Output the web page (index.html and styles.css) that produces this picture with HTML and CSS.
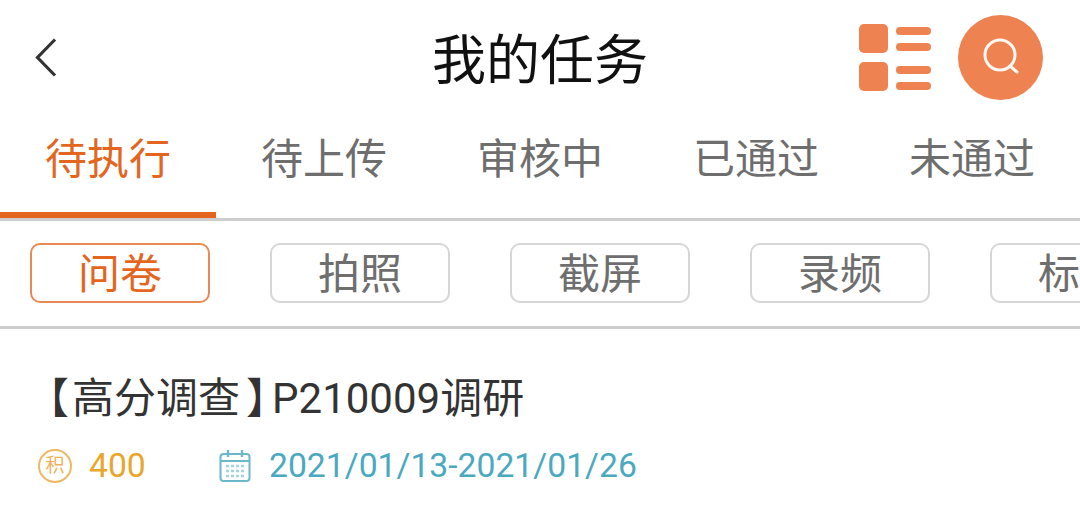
FILE: index.html
```html
<!DOCTYPE html>
<html>
  <head>
    <meta charset="UTF-8" />
    <title>我的任务</title>
    <link rel="stylesheet" href="styles.css">
  </head>
  <body>
    <div class="top-bar">
      <div class="back-button">
        <svg width="26" height="42" viewBox="0 0 26 42">
          <path d="M21 2.5 L3.5 20.5 L21 38.5" fill="none" stroke="#333" stroke-width="3.2" />
        </svg>
      </div>
      <div class="page-title">我的任务</div>
      <div class="top-actions">
        <svg class="list-icon" width="72" height="68" viewBox="0 0 72 68">
          <rect x="0" y="0" width="29" height="29" rx="5" fill="#ef8251" />
          <rect x="0" y="38" width="29" height="29" rx="5" fill="#ef8251" />
          <rect x="37" y="3" width="35" height="8" rx="4" fill="#ef8251" />
          <rect x="37" y="19" width="35" height="8" rx="4" fill="#ef8251" />
          <rect x="37" y="42" width="35" height="8" rx="4" fill="#ef8251" />
          <rect x="37" y="58" width="35" height="8" rx="4" fill="#ef8251" />
        </svg>
        <div class="search-button">
          <svg width="42" height="42" viewBox="0 0 42 42">
            <circle cx="20" cy="19" r="15" fill="none" stroke="#fff8f2" stroke-width="3" />
            <path d="M30 30 L37 36" fill="none" stroke="#fff8f2" stroke-width="3" stroke-linecap="round" />
          </svg>
        </div>
      </div>
    </div>

    <div class="tabs">
      <div class="tab active">待执行</div>
      <div class="tab">待上传</div>
      <div class="tab">审核中</div>
      <div class="tab">已通过</div>
      <div class="tab">未通过</div>
    </div>

    <div class="chips">
      <div class="chip active">问卷</div>
      <div class="chip">拍照</div>
      <div class="chip">截屏</div>
      <div class="chip">录频</div>
      <div class="chip">标注</div>
    </div>

    <div class="task">
      <div class="task-title"><span class="bracket-open">【</span>高分调查<span class="bracket-close">】</span>P210009调研</div>
      <div class="task-meta">
        <div class="points">
          <div class="points-icon">积</div>
          <span>400</span>
        </div>
        <div class="dates">
          <svg width="32" height="34" viewBox="0 0 32 34">
            <rect x="1.5" y="5" width="29" height="27" rx="3" fill="none" stroke="#6bb8cb" stroke-width="2" />
            <path d="M1.5 12 H30.5" stroke="#6bb8cb" stroke-width="2" />
            <path d="M9 1 V8 M23 1 V8" stroke="#6bb8cb" stroke-width="2.4" />
            <path d="M7 17 H25 M7 22 H25 M7 27 H25" stroke="#a5d4df" stroke-width="2.5" stroke-dasharray="3 2" />
          </svg>
          <span>2021/01/13-2021/01/26</span>
        </div>
      </div>
    </div>
  </body>
</html>
```

FILE: styles.css
```css
* {
  box-sizing: border-box;
  margin: 0;
  padding: 0;
}

body {
  width: 1080px;
  height: 529px;
  overflow: hidden;
  background-color: #fff;
  font-family: Roboto, 'Noto Sans CJK SC', sans-serif;
}

.top-bar {
  position: relative;
  display: flex;
  align-items: center;
  justify-content: space-between;
  height: 118px;
  padding: 0 37px 2px 34px;
}

.back-button {
  display: flex;
}

.page-title {
  position: absolute;
  left: 0;
  right: 0;
  top: 27px;
  text-align: center;
  font-size: 54px;
  line-height: 70px;
  color: #111;
}

.top-actions {
  display: flex;
  align-items: center;
  gap: 27px;
}

.search-button {
  display: flex;
  align-items: center;
  justify-content: center;
  width: 85px;
  height: 85px;
  margin-bottom: 2px;
  border-radius: 50%;
  background-color: #ef8251;
}

.tabs {
  display: flex;
  height: 103px;
  border-bottom: 3px solid #cdcdcd;
}

.tab {
  width: 216px;
  height: 100px;
  padding-top: 12px;
  text-align: center;
  font-size: 42px;
  line-height: 60px;
  color: #6e6e6e;
}

.tab.active {
  color: #e4661e;
  border-bottom: 6px solid #e4661e;
}

.chips {
  display: flex;
  gap: 60px;
  height: 108px;
  padding: 22px 0 0 30px;
  border-bottom: 3px solid #cdcdcd;
  overflow: hidden;
}

.chip {
  flex: none;
  width: 180px;
  height: 60px;
  border: 2px solid #d6d6d6;
  border-radius: 10px;
  text-align: center;
  font-size: 42px;
  line-height: 59px;
  color: #6e6e6e;
}

.chip.active {
  border-color: #e88a55;
  color: #e4661e;
}

.task {
  padding: 42px 0 0 38px;
}

.task-title {
  font-size: 42px;
  line-height: 56px;
  color: #333;
}

/* halt drops the empty half of the full width bracket */
.bracket-open {
  font-feature-settings: "halt";
  margin: 0 3px 0 10px;
}

.bracket-close {
  font-feature-settings: "halt";
  margin: 0 5px 0 6px;
}

.task-meta {
  display: flex;
  align-items: center;
  margin-top: 17px;
  font-size: 33.7px;
  line-height: 44px;
}

.points {
  display: flex;
  align-items: center;
  gap: 17px;
  width: 181px;
  color: #e9a62b;
}

.points-icon {
  flex: none;
  width: 34px;
  height: 34px;
  border: 2px solid #eeb964;
  border-radius: 50%;
  text-align: center;
  font-size: 19px;
  line-height: 29px;
  color: #eeb05a;
}

.dates {
  display: flex;
  align-items: center;
  gap: 18px;
  color: #4aa9c0;
}
```
